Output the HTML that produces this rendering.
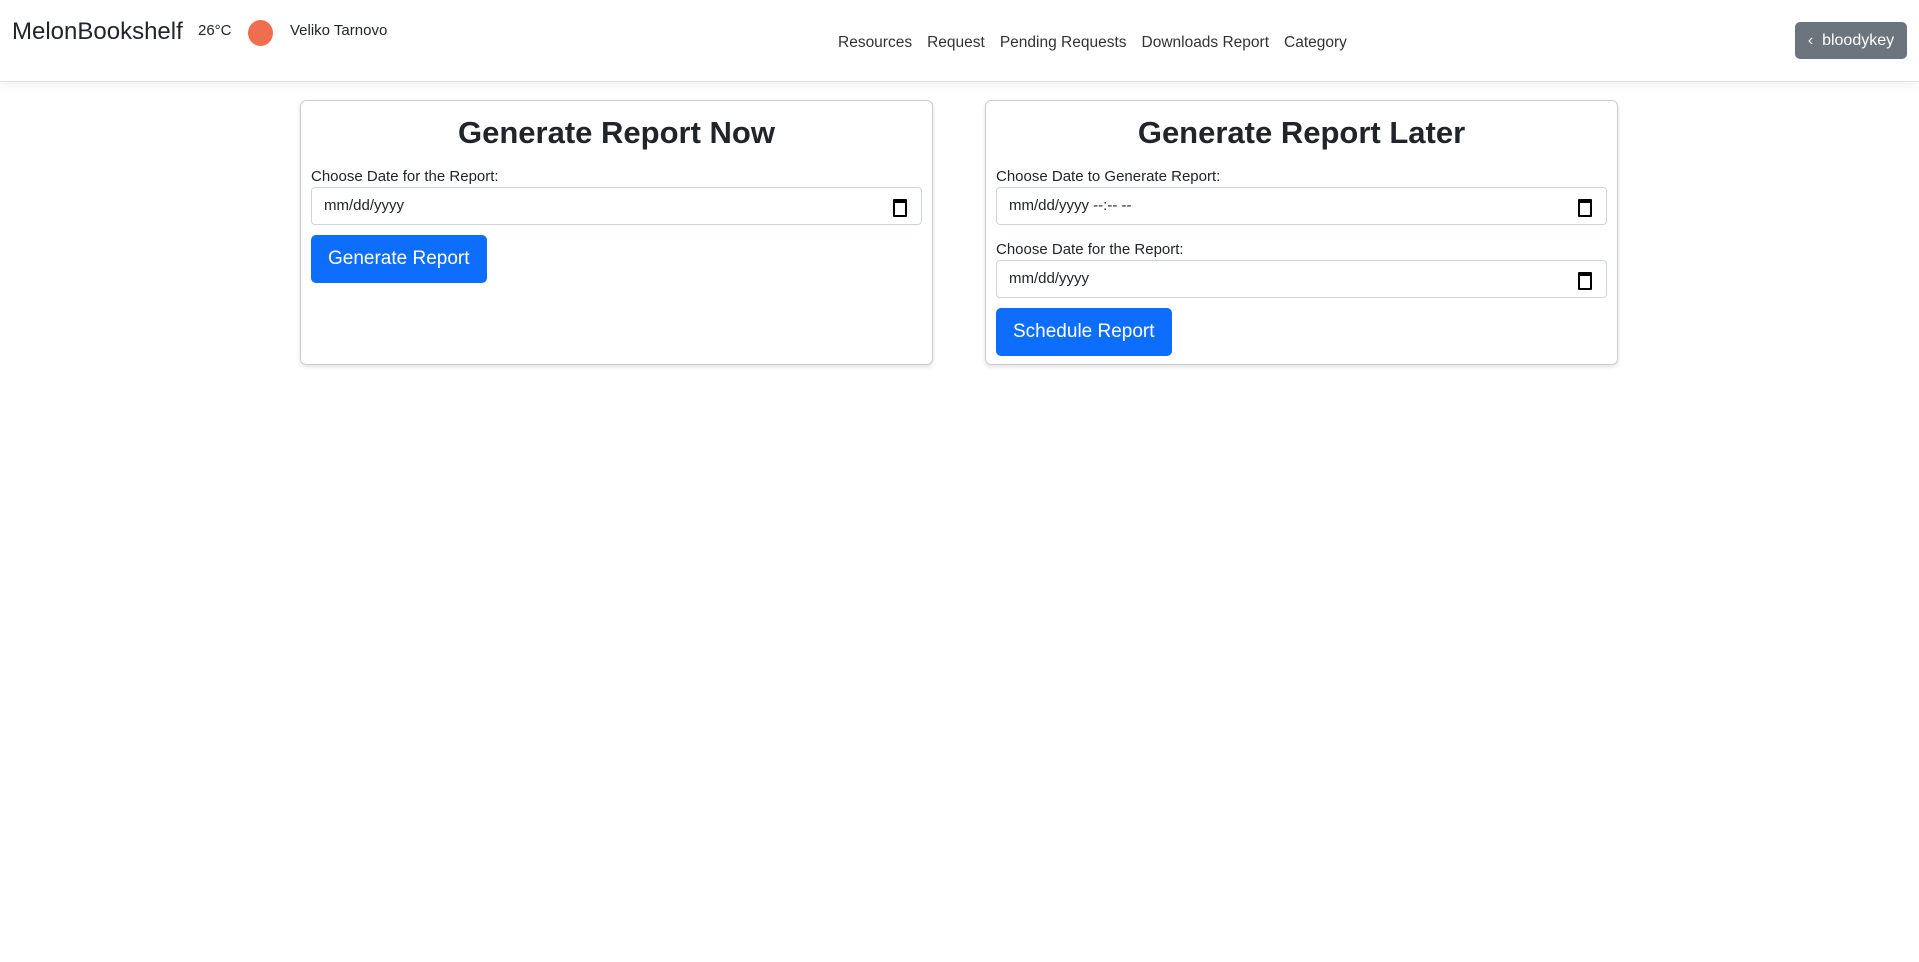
<!DOCTYPE html>
<html><head><meta charset="utf-8"><style>
*{box-sizing:border-box;margin:0;padding:0}
body{width:1919px;height:962px;background:#fff;font-family:"Liberation Sans",sans-serif;color:#212529;position:relative;overflow:hidden}
.nav{position:absolute;left:0;top:0;width:1919px;height:82px;border-bottom:1px solid #dee2e6;box-shadow:0 4px 10px rgba(0,0,0,.05);background:#fff}
.abs{position:absolute;white-space:nowrap}
.brand{left:12px;top:18px;font-size:24px}
.temp{left:198px;top:22px;font-size:15px}
.dot{left:248px;top:20px;width:25px;height:26px;border-radius:50%;background:#ee6e4f}
.city{left:290px;top:22px;font-size:15px}
.links{left:838px;top:34px;font-size:15.5px;color:#333}
.links span{margin-right:15px}
.user{left:1795px;top:22px;width:112px;height:37px;background:#6c757d;border-radius:5px;color:#fff;font-size:16px;line-height:37px;text-align:center}
.card{position:absolute;top:100px;width:633px;height:265px;border:1px solid #ccc;border-radius:6px;box-shadow:0 2px 4px rgba(0,0,0,.12);padding:0 10px}
.card h2{text-align:center;font-size:31px;font-weight:bold;margin-top:14px;height:45px;color:#212529}
label{display:block;font-size:15px;margin-top:8px;height:17px}
label.l2{margin-top:16px}
.inp{height:38px;border:1px solid #ced4da;border-radius:4px;margin-top:2px;font-size:15px;padding:0 12px;line-height:36px;position:relative}
.inp:after{content:"";position:absolute;right:14px;top:11px;width:10px;height:12px;border:2px solid #000;border-top-width:4px;border-radius:1px}
.btn{display:inline-block;background:#0d6efd;color:#fff;font-size:19px;border-radius:5px;height:48px;line-height:48px;padding:0 17px;margin-top:10px}
</style></head><body>
<div class="nav">
<div class="abs brand">MelonBookshelf</div>
<div class="abs temp">26°C</div>
<div class="abs dot"></div>
<div class="abs city">Veliko Tarnovo</div>
<div class="abs links"><span>Resources</span><span>Request</span><span>Pending Requests</span><span>Downloads Report</span><span>Category</span></div>
<div class="abs user">‹&nbsp; bloodykey</div>
</div>
<div class="card" style="left:300px">
<h2>Generate Report Now</h2>
<label>Choose Date for the Report:</label>
<div class="inp">mm/dd/yyyy</div>
<div class="btn">Generate Report</div>
</div>
<div class="card" style="left:985px">
<h2>Generate Report Later</h2>
<label>Choose Date to Generate Report:</label>
<div class="inp">mm/dd/yyyy --:-- --</div>
<label class="l2">Choose Date for the Report:</label>
<div class="inp">mm/dd/yyyy</div>
<div class="btn">Schedule Report</div>
</div>
</body></html>
